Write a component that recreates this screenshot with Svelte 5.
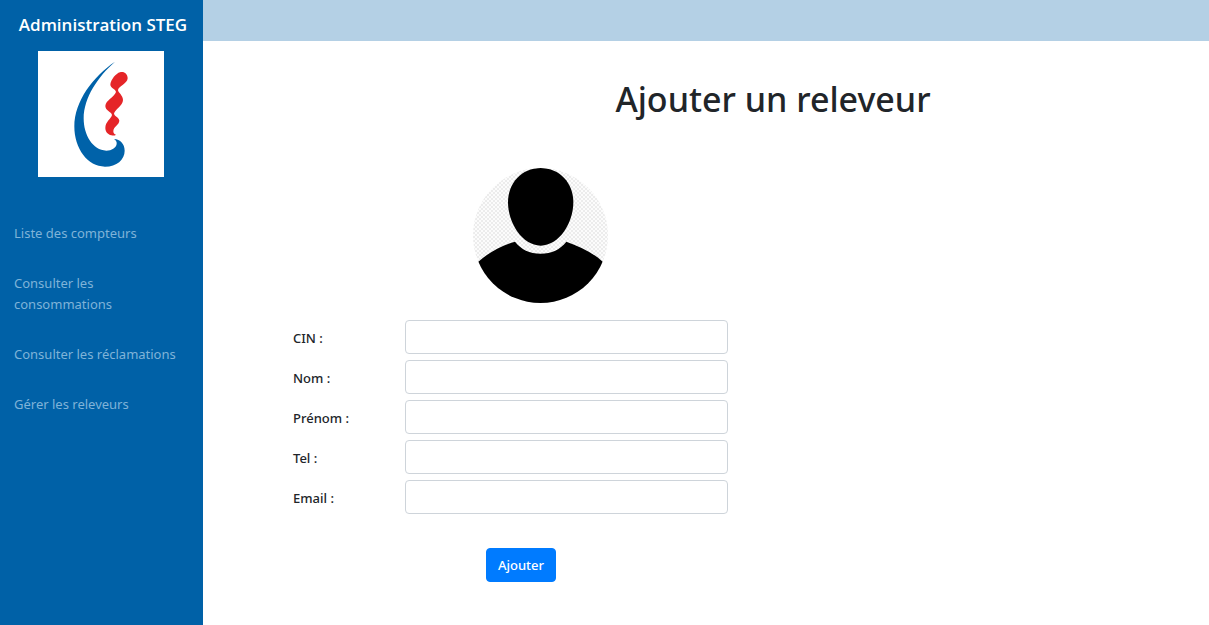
<script>
  const links = [
    'Liste des compteurs',
    'Consulter les consommations',
    'Consulter les réclamations',
    'Gérer les releveurs'
  ];

  const fields = [
    { id: 'cin', label: 'CIN :', type: 'text' },
    { id: 'nom', label: 'Nom :', type: 'text' },
    { id: 'prenom', label: 'Prénom :', type: 'text' },
    { id: 'tel', label: 'Tel :', type: 'tel' },
    { id: 'email', label: 'Email :', type: 'email' }
  ];
</script>

<div class="layout">
  <aside class="sidebar">
    <h2 class="brand">Administration STEG</h2>
    <svg class="logo" viewBox="0 0 378 378" aria-hidden="true">
      <rect width="378" height="378" fill="#fff" />
      <path
        fill="#0062a9"
        d="M231 32C166 76 109 150 109 226C109 293 149 347 201 347C236 347 260 326 260 299C260 279 247 265 228 264C234 268 237 273 236 279C234 291 221 299 205 299C164 298 137 252 137 202C138 139 179 78 231 32Z"
      />
      <path
        fill="#e52528"
        d="M246 64C258 60 269 69 269 82C268 98 242 106 240 117C240 124 255 133 255 147C255 164 230 176 228 188C229 195 244 200 244 209C243 223 226 226 226 241C226 247 229 250 234 251C231 254 226 254 220 253C209 250 202 242 202 231C202 212 219 204 222 192C220 182 202 179 202 165C203 148 229 138 234 123C233 114 217 113 217 100C219 86 234 67 246 64Z"
      />
    </svg>
    <nav class="menu">
      {#each links as link}
        <a href="#menu">{link}</a>
      {/each}
    </nav>
  </aside>

  <div class="page">
    <header class="topbar"></header>
    <main>
      <h1>Ajouter un releveur</h1>
      <form>
        <svg class="avatar" viewBox="0 0 405 405" aria-hidden="true">
          <defs>
            <pattern id="checks" width="12" height="12" patternUnits="userSpaceOnUse">
              <rect width="12" height="12" fill="#fcfcfc" />
              <path d="M0 0h6v6h6v6H6V6H0z" fill="#ececec" />
            </pattern>
            <clipPath id="disc"><circle cx="202.500" cy="202.500" r="202.500" /></clipPath>
          </defs>
          <g clip-path="url(#disc)">
            <rect width="405" height="405" fill="url(#checks)" />
            <path
              d="M203 0C260 0 301 45 301 103C301 165 258 233 203 233C148 233 105 165 105 103C105 45 146 0 203 0Z"
            />
            <path
              d="M126 221C144 244 170 257 203 257C236 257 262 244 280 221C320 235 358 253 389 281L405 405H0L16 281C47 253 86 233 126 221Z"
            />
          </g>
        </svg>
        {#each fields as field}
          <div class="row">
            <label for={field.id}>{field.label}</label>
            <input id={field.id} name={field.id} type={field.type} />
          </div>
        {/each}
        <button type="button">Ajouter</button>
      </form>
    </main>
  </div>
</div>

<style>
  :global(body) {
    margin: 0;
    background: #fff;
    color: #212529;
    font: 13px/21px 'Noto Sans', 'Open Sans', sans-serif;
  }

  .layout {
    display: grid;
    grid-template-columns: 203px 1fr;
    min-height: 100vh;
  }

  .sidebar {
    display: flex;
    flex-direction: column;
    box-sizing: border-box;
    padding: 13px 15px 13px 14px;
    background: #0061a7;
  }

  .brand {
    margin: 0 0 14px;
    padding-left: 4px;
    color: #fff;
    font-family: 'Open Sans', sans-serif;
    font-size: 17px;
    font-weight: 600;
    line-height: 24px;
    text-align: center;
    white-space: nowrap;
  }

  .logo {
    align-self: center;
    width: 126px;
    height: 126px;
  }

  .menu {
    display: flex;
    flex-direction: column;
    gap: 29px;
    margin-top: 46px;
  }

  .menu a {
    color: #7fb3d8;
    text-decoration: none;
  }

  .topbar {
    height: 41px;
    background: #b4d0e5;
  }

  main {
    padding: 37px 0 43px 90px;
  }

  h1 {
    margin: 0 0 47px;
    padding-left: 44px;
    font-size: 34px;
    font-weight: 500;
    line-height: 43px;
    text-align: center;
  }

  form {
    display: flex;
    flex-direction: column;
    gap: 6px;
    width: 48%;
    max-width: 435px;
  }

  .avatar {
    width: 135px;
    height: 135px;
    margin: 0 0 11px 180px;
  }

  .row {
    display: grid;
    grid-template-columns: 112px 1fr;
    align-items: center;
  }

  label {
    padding-top: 2px;
    font-weight: 500;
  }

  input {
    box-sizing: border-box;
    width: 100%;
    height: 34px;
    padding: 5px 11px;
    border: 1px solid #ced4da;
    border-radius: 4px;
    background: #fff;
    color: #495057;
    font: inherit;
  }

  button {
    width: 70px;
    height: 34px;
    margin: 28px 0 0 193px;
    padding: 0;
    border: 1px solid #007bff;
    border-radius: 4px;
    background: #007bff;
    color: #fff;
    font: inherit;
    font-weight: 500;
  }
</style>
